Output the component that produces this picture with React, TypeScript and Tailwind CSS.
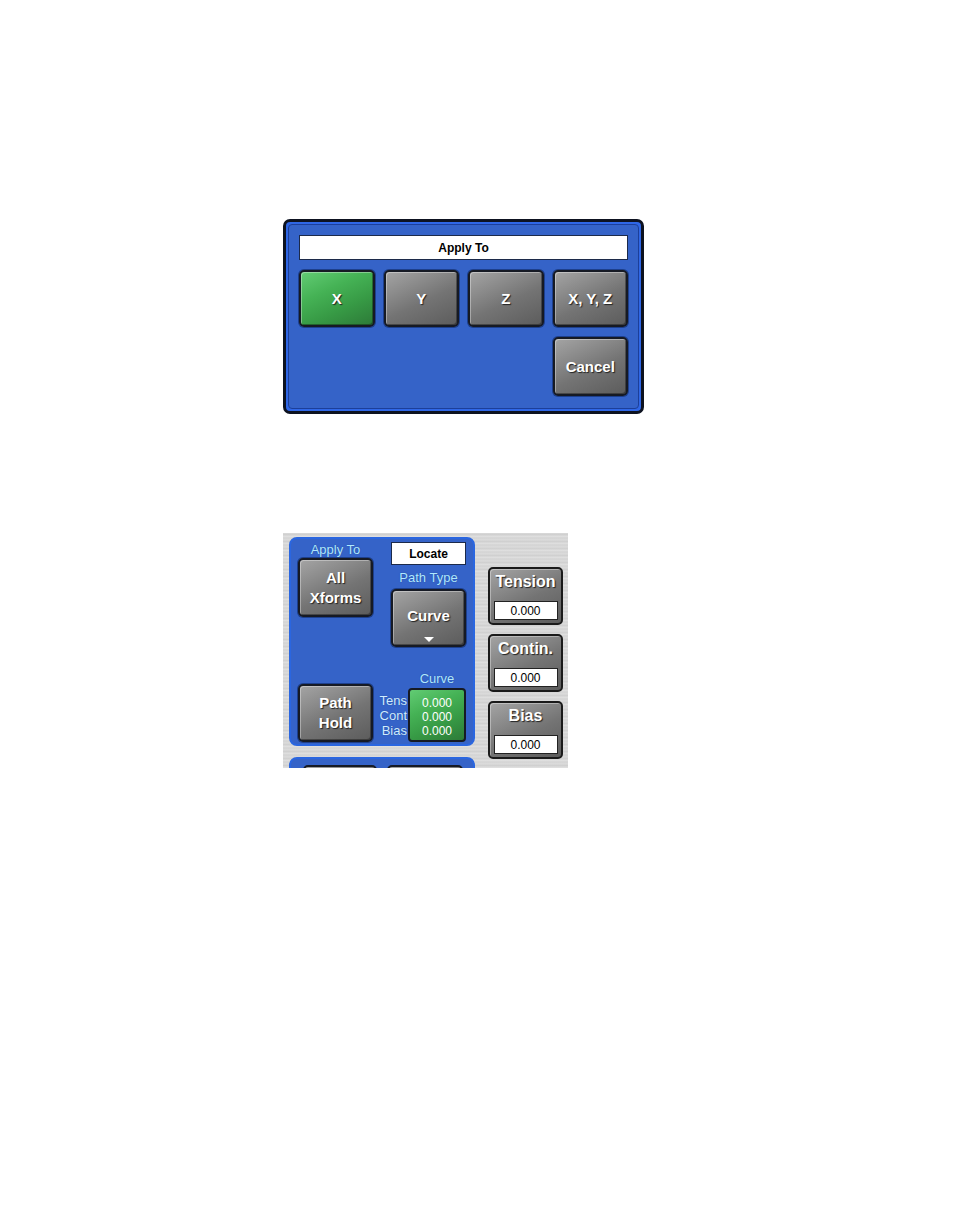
import React from 'react';

const grayBtn =
  'bg-[linear-gradient(155deg,#a4a4a4_0%,#8a8a8a_30%,#747474_55%,#5c5c5c_100%)]';
const greenBtn =
  'bg-[linear-gradient(155deg,#62cc74_0%,#45b255_35%,#379a45_65%,#2d7a38_100%)]';

const Key = ({
  children,
  green = false,
  className = ''
}: {
  children: React.ReactNode;
  green?: boolean;
  className?: string;
}) => <div className={`shrink-0 flex flex-col items-center justify-center rounded-[5px] border-2 border-[#161a24] shadow-[inset_1px_1px_0_rgba(255,255,255,0.35),inset_-1px_-1px_0_rgba(0,0,0,0.35),0_0_0_1px_#1d3f8c] text-white font-bold text-[15px] leading-[20px] [text-shadow:1px_1px_1px_#222] ${green ? greenBtn : grayBtn} ${className}`}>
    {children}
  </div>;

const Label = ({ children, className = '' }: { children: React.ReactNode; className?: string }) => <div className={`shrink-0 text-[#b0e8ff] text-[13px] leading-none text-center [text-shadow:0_0_1px_#1b3f90] ${className}`}>
    {children}
  </div>;

const ValueKey = ({ label }: { label: string }) => <div className={`w-[75px] h-[58px] rounded-[5px] border-2 border-[#1a1a1a] shadow-[inset_1px_1px_0_rgba(255,255,255,0.35)] ${grayBtn} flex flex-col items-center pt-[2px]`}>
    <div className="text-white font-bold text-[16px] leading-[22px] [text-shadow:1px_1px_1px_#222]">{label}</div>
    <div className="mt-auto mb-[3px] w-[64px] h-[19px] bg-white border border-[#222] flex items-center justify-center text-[12px] text-black">
      0.000
    </div>
  </div>;

const App = () => {
  return <div className="w-[954px] h-[1227px] bg-white font-['Liberation_Sans',Arial,sans-serif] pt-[219px] pl-[283px]">
      {/* Apply To dialog */}
      <div className="w-[361px] h-[195px] rounded-[7px] border-[3px] border-[#0d1220] bg-[#2f67e6] p-[2px]">
        <div className="h-full rounded-[4px] border border-[#1c3f9a] bg-[#3563c8] px-[10px] pt-[10px]">
          <div className="h-[25px] bg-white border border-[#1c2a4a] flex items-center justify-center text-[12px] font-bold text-black">
            Apply To
          </div>
          <div className="mt-[10px] grid grid-cols-4 gap-x-[9px] gap-y-[10px]">
            <Key green className="h-[57px]">X</Key>
            <Key className="h-[57px]">Y</Key>
            <Key className="h-[57px]">Z</Key>
            <Key className="h-[57px]">X, Y, Z</Key>
            <Key className="h-[59px] col-start-4">Cancel</Key>
          </div>
        </div>
      </div>

      {/* Path panel */}
      <div className="mt-[119px] w-[285px] h-[235px] overflow-hidden flex pl-[6px] pt-[4px] bg-[repeating-linear-gradient(180deg,#dadada_0px,#cdcdcd_2px,#e2e2e2_3px,#d3d3d3_5px,#dcdcdc_7px)]">
        <div className="shrink-0 flex flex-col w-[186px]">
          <div className="shrink-0 h-[209px] rounded-[8px] bg-[#3563c8] border-2 border-[#2a66e0] flex justify-between pl-[7px] pr-[7px] pt-[1px] pb-[2px]">
            <div className="flex flex-col w-[75px]">
              <Label className="h-[18px] flex items-center justify-center">Apply To</Label>
              <Key className="h-[59px]">
                <span>All</span>
                <span>Xforms</span>
              </Key>
              <Key className="h-[58px] mt-auto">
                <span>Path</span>
                <span>Hold</span>
              </Key>
            </div>
            <div className="flex flex-col items-end w-[84px]">
              <div className="shrink-0 mt-[2px] w-[75px] h-[23px] bg-white border border-[#1c2a4a] flex items-center justify-center text-[12px] font-bold text-black">
                Locate
              </div>
              <Label className="w-[75px] h-[24px] flex items-center justify-center">Path Type</Label>
              <Key className="w-[75px] h-[58px] relative">
                <span className="-mt-[4px]">Curve</span>
                <span className="absolute bottom-[3px] left-1/2 -translate-x-1/2 w-0 h-0 border-l-[5px] border-r-[5px] border-t-[5px] border-l-transparent border-r-transparent border-t-white" />
              </Key>
              <Label className="mt-auto w-[58px] h-[16px] mb-[2px] flex items-center justify-center">Curve</Label>
              <div className="shrink-0 flex items-stretch">
                <div className="flex flex-col items-end justify-center pr-[1px] text-[13px] leading-[15px] text-[#d0ecff] [text-shadow:0_0_1px_#1b3f90]">
                  <span>Tens</span>
                  <span>Cont</span>
                  <span>Bias</span>
                </div>
                <div className={`w-[58px] h-[54px] rounded-[4px] border-2 border-[#161a24] ${greenBtn} flex flex-col items-center justify-center pt-[3px] text-[12px] leading-[14px] text-white`}>
                  <span>0.000</span>
                  <span>0.000</span>
                  <span>0.000</span>
                </div>
              </div>
            </div>
          </div>
          <div className="shrink-0 mt-[11px] h-[40px] rounded-t-[8px] bg-[#3563c8] border-2 border-[#2a66e0] flex gap-[10px] pl-[12px] pt-[6px]">
            <div className={`w-[74px] h-[40px] rounded-[5px] border-2 border-[#161a24] ${grayBtn}`} />
            <div className={`w-[76px] h-[40px] rounded-[5px] border-2 border-[#161a24] ${grayBtn}`} />
          </div>
        </div>
        <div className="ml-[13px] pt-[30px] flex flex-col gap-[9px]">
          <ValueKey label="Tension" />
          <ValueKey label="Contin." />
          <ValueKey label="Bias" />
        </div>
      </div>
    </div>;
};

export default App;
